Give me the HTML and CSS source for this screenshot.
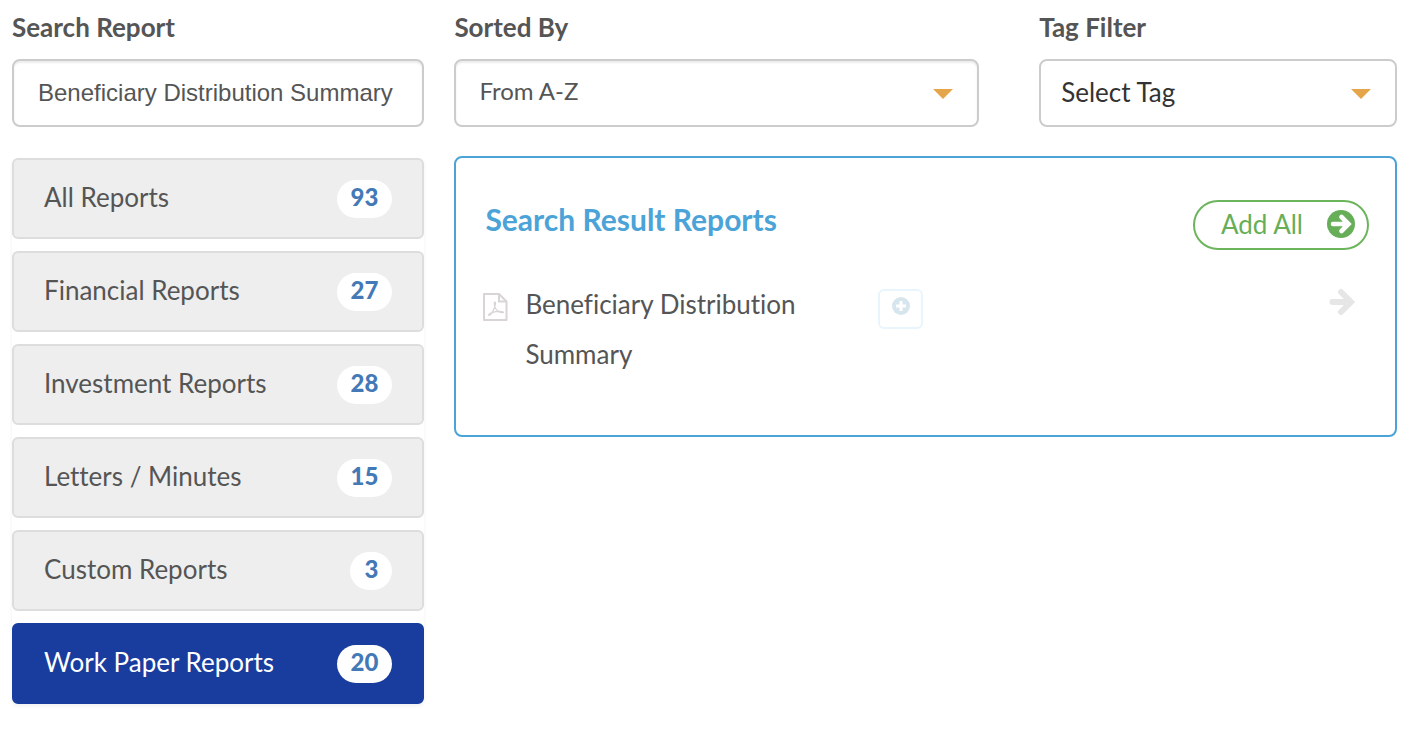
FILE: index.html
```html
<!DOCTYPE html>
<html lang="en">

<head>
    <meta charset="UTF-8">
    <meta name="viewport" content="width=device-width, initial-scale=1.0">
    <title>Reports</title>
    <link rel="stylesheet" href="styles.css">
</head>

<body>
    <div class="page">
        <aside class="sidebar">
            <div class="field">
                <label for="search">Search Report</label>
                <input class="control search" id="search" type="text" value="Beneficiary Distribution Summary">
            </div>

            <nav class="categories">
                <a class="category" href="#all"><span class="name">All Reports</span> <span class="badge">93</span></a>
                <a class="category" href="#financial"><span class="name">Financial Reports</span> <span class="badge">27</span></a>
                <a class="category" href="#investment"><span class="name">Investment Reports</span> <span class="badge">28</span></a>
                <a class="category" href="#letters"><span class="name">Letters / Minutes</span> <span class="badge">15</span></a>
                <a class="category" href="#custom"><span class="name">Custom Reports</span> <span class="badge">3</span></a>
                <a class="category active" href="#workpaper"><span class="name">Work Paper Reports</span> <span class="badge">20</span></a>
            </nav>
        </aside>

        <main class="main">
            <div class="filters">
                <div class="field">
                    <label for="sort">Sorted By</label>
                    <div class="dropdown">
                        <select class="control sort" id="sort">
                            <option>From A-Z</option>
                            <option>From Z-A</option>
                        </select>
                    </div>
                </div>
                <div class="field">
                    <label for="tag">Tag Filter</label>
                    <div class="dropdown">
                        <select class="control tag" id="tag">
                            <option>Select Tag</option>
                        </select>
                    </div>
                </div>
            </div>

            <section class="results">
                <div class="results-header">
                    <h2>Search Result Reports</h2>
                    <button class="add-all" type="button">
                        Add All
                        <svg width="28" height="28" viewBox="0 0 28 28" aria-hidden="true">
                            <circle cx="14" cy="14" r="14" fill="#67ae58"/>
                            <path d="M6 14h14M14.500 7l7 7-7 7" fill="none" stroke="#fff" stroke-width="4.600" stroke-linecap="round"/>
                        </svg>
                    </button>
                </div>

                <div class="report">
                    <svg class="pdf-icon" width="26" height="30" viewBox="0 0 26 30" fill="none" stroke="#d9d4d6" stroke-width="2" aria-hidden="true">
                        <path d="M2 2h15l7.500 7.500V28H2z" stroke-linejoin="round"/>
                        <path d="M17 2v7.500h7.500"/>
                        <path d="M13 10c-1.300 0-.8 4 .8 6.800 1.500 2.400 4.500 4 7.200 3.900 1.400-.4-.8-1.500-4.300-1.300-3.500.2-7.800 1.300-9.700 2.900-1.300 1.500.7 1.700 2.700-1.100 1.600-2.500 3.400-6.500 3.800-9.400.1-1 0-1.800-.5-1.800z" stroke-width="1.200"/>
                    </svg>
                    <span class="report-name">Beneficiary Distribution Summary</span>
                    <button class="tag-button" type="button" aria-label="Add tag">
                        <svg width="18" height="18" viewBox="0 0 18 18" aria-hidden="true">
                            <circle cx="9" cy="9" r="9" fill="#d7e6ee"/>
                            <path d="M9 4v10M4 9h10" stroke="#fff" stroke-width="3"/>
                        </svg>
                    </button>
                    <button class="add-button" type="button" aria-label="Add report">
                        <svg width="26" height="28" viewBox="0 0 26 28" fill="none" stroke="#e6e6e6" stroke-width="6" aria-hidden="true">
                            <path d="M3.500 14h17" stroke-linecap="round"/>
                            <path d="M12 4l10 10-10 10" stroke-linecap="round"/>
                        </svg>
                    </button>
                </div>
            </section>
        </main>
    </div>
</body>

</html>
```
FILE: styles.css
```css
* {
    box-sizing: border-box;
}

body {
    margin: 0;
    font-family: Lato, "Open Sans", sans-serif;
    font-size: 26px;
    font-variant-ligatures: none;
    color: #555;
    background: #fff;
}

button {
    font: inherit;
    background: none;
    border: none;
    padding: 0;
    cursor: pointer;
}

svg {
    display: block;
}

.page {
    display: grid;
    grid-template-columns: minmax(0, 7fr) minmax(0, 16fr);
    gap: 30px;
    align-items: start;
    padding: 11px 19px 28px 12px;
}

/* Fields */
.field label {
    display: block;
    margin-bottom: 16px;
    font-size: 26px;
    font-weight: bold;
    line-height: 32px;
}

.control {
    display: block;
    width: 100%;
    height: 68px;
    border: 2px solid #ccc;
    border-radius: 8px;
    background: #fff;
    color: #555;
    font-family: inherit;
    font-size: 24px;
    outline: none;
}

.search {
    padding: 0 24px;
    font-family: "Liberation Sans", Arial, sans-serif;
    box-shadow: inset 0 2px 2px rgba(0, 0, 0, 0.08);
}

.sort {
    padding: 0 23px 5px;
    appearance: none;
    box-shadow: inset 0 2px 2px rgba(0, 0, 0, 0.08);
}

.tag {
    padding: 0 20px 2px;
    appearance: none;
    color: #333;
    font-size: 26px;
}

.dropdown {
    position: relative;
}

.dropdown::after {
    content: "";
    position: absolute;
    top: 30px;
    right: 26px;
    border: 10px solid transparent;
    border-top-color: #e5a54b;
    border-bottom: none;
    pointer-events: none;
}

/* Report categories */
.categories {
    display: flex;
    flex-direction: column;
    gap: 12px;
    margin-top: 31px;
    border-radius: 6px;
    box-shadow: 0 2px 4px rgba(0, 0, 0, 0.06);
}

.category {
    display: flex;
    justify-content: space-between;
    align-items: center;
    height: 81px;
    padding: 0 30px;
    border: 2px solid #ddd;
    border-radius: 6px;
    background: #eee;
    color: #555;
    text-decoration: none;
}

.category.active {
    border-color: #183d9e;
    background: #183d9e;
    color: #fff;
}

.name {
    padding-bottom: 4px;
}

.badge {
    padding: 0 14px 4px;
    border-radius: 20px;
    background: #fff;
    color: #4479b7;
    font-size: 24px;
    font-weight: 900;
    line-height: 34px;
}

/* Search results */
.filters {
    display: grid;
    grid-template-columns: minmax(0, 22fr) minmax(0, 15fr);
    gap: 60px;
}

.results {
    min-height: 281px;
    margin-top: 29px;
    padding: 42px 26px 40px;
    border: 2px solid #4ba3d7;
    border-radius: 8px;
}

.results-header {
    display: flex;
    justify-content: space-between;
    align-items: flex-start;
}

.results h2 {
    margin: 0;
    padding-left: 3px;
    color: #4ba3d7;
    font-size: 30px;
    font-weight: bold;
    line-height: 38px;
}

.add-all {
    display: flex;
    align-items: center;
    gap: 24px;
    height: 50px;
    padding: 0 12px 2px 26px;
    border: 2px solid #6cb55d;
    border-radius: 25px;
    color: #67ae58;
}

.report {
    display: grid;
    grid-template-columns: 26px minmax(0, 2fr) minmax(0, 3fr) auto;
    column-gap: 17px;
    align-items: start;
    margin-top: 29px;
}

.pdf-icon {
    margin-top: 13px;
}

.report-name {
    max-width: 300px;
    line-height: 50px;
}

.tag-button {
    display: flex;
    justify-content: center;
    width: 45px;
    height: 40px;
    margin: 10px 0 0 28px;
    padding-top: 6px;
    border: 2px solid #e8f5fc;
    border-radius: 6px;
}

.add-button {
    margin: 9px 14px 0 0;
}
```
